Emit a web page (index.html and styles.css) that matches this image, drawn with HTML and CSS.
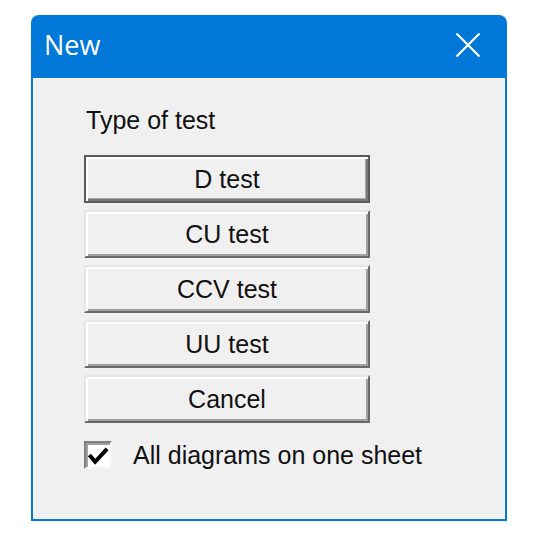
FILE: index.html
```html
<!DOCTYPE html>
<html>
<head>
<meta charset="utf-8">
<link rel="stylesheet" href="styles.css">
</head>
<body>
<div class="page">
  <div class="window">
    <div class="titlebar">
      <span class="title">New</span>
      <svg class="close" width="26" height="26" viewBox="0 0 26 26">
        <path d="M1.5 1.5 L24.5 24.5 M24.5 1.5 L1.5 24.5" stroke="#ffffff" stroke-width="2.2" fill="none"/>
      </svg>
    </div>
    <div class="body">
      <div class="label">Type of test</div>
      <div class="buttons">
        <div class="btn default">D test</div>
        <div class="btn">CU test</div>
        <div class="btn">CCV test</div>
        <div class="btn">UU test</div>
        <div class="btn">Cancel</div>
      </div>
      <div class="check-row">
        <div class="checkbox">
          <svg width="24" height="24" viewBox="0 0 24 24">
            <path d="M2.5 11 L8.5 18 L21 4.5" stroke="#000" stroke-width="4.2" fill="none" stroke-linejoin="miter"/>
          </svg>
        </div>
        <span class="check-label">All diagrams on one sheet</span>
      </div>
    </div>
  </div>
</div>
</body>
</html>
```

FILE: styles.css
```css
html, body {
  margin: 0;
  padding: 0;
  background: #ffffff;
}
.page {
  width: 553px;
  height: 540px;
  padding: 15px 0 0 31px;
  box-sizing: border-box;
}
.window {
  width: 476px;
  height: 506px;
  background: #0078d7;
  border-radius: 8px 8px 0 0;
  display: flex;
  flex-direction: column;
  padding: 0 2px 2px 2px;
  box-sizing: border-box;
}
.titlebar {
  height: 63px;
  flex: none;
  display: flex;
  align-items: center;
  justify-content: space-between;
  padding: 0 24px 0 11px;
  box-sizing: border-box;
}
.title {
  font-family: "Open Sans", "Noto Sans", sans-serif;
  font-size: 27px;
  color: #ffffff;
  line-height: 30px;
  margin-top: -4px;
}
.close {
  display: block;
  margin-top: -3px;
}
.body {
  flex: 1;
  background: #f0f0f0;
  border-top: 1px solid #fdfdfd;
  border-left: 1px solid #fbf6f2;
  border-right: 1px solid #fbf6f2;
  border-bottom: 1px solid #fbf6f2;
  padding: 26px 0 0 50px;
  font-family: "Liberation Sans", Arial, sans-serif;
  font-size: 25px;
  color: #111;
  display: flex;
  flex-direction: column;
}
.label {
  line-height: 30px;
  margin-left: 2px;
}
.buttons {
  margin-top: 20px;
  display: flex;
  flex-direction: column;
  gap: 7px;
}
.btn {
  width: 286px;
  height: 48px;
  box-sizing: border-box;
  background: #f0f0f0;
  display: flex;
  align-items: center;
  justify-content: center;
  border: 2px solid;
  border-color: #e6e6e6 #6a6a6a #6a6a6a #e6e6e6;
  box-shadow: inset 2px 2px 0 #ffffff, inset -2px -2px 0 #a0a0a0;
  padding-top: 0;
}
.btn.default {
  border: 2px solid #5a5a5a;
  box-shadow: inset 2px 2px 0 #ffffff, inset -2px -2px 0 #7a7a7a, inset -3px -3px 0 #a8a8a8;
}
.check-row {
  margin-top: 17px;
  display: flex;
  align-items: center;
}
.checkbox {
  width: 28px;
  height: 28px;
  box-sizing: border-box;
  border: 2px solid;
  border-color: #808080 #f4f4f4 #f4f4f4 #808080;
  box-shadow: inset 2px 2px 0 #a0a0a0;
  background: #ffffff;
  display: flex;
  align-items: center;
  justify-content: center;
}
.checkbox svg {
  display: block;
  margin: 1px 0 0 1px;
}
.check-label {
  margin-left: 21px;
  line-height: 30px;
}
```
